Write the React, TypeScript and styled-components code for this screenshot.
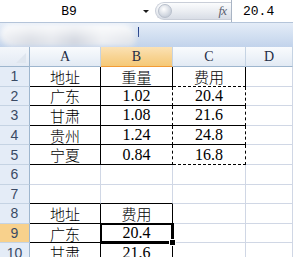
import { Fragment, ReactElement } from "react";
import styled, { createGlobalStyle, css } from "styled-components";

const GlobalStyle = createGlobalStyle`
  html, body {
    margin: 0;
    padding: 0;
    background: #ffffff;
    overflow: hidden;
  }
`;

type Edge = "g" | "s" | "d";

const Page = styled.div`
  width: 293px;
  height: 257px;
  overflow: hidden;
  display: flex;
  flex-direction: column;
  background: #ffffff;
  & > * {
    flex-shrink: 0;
  }
`;

const FormulaBar = styled.div`
  height: 23px;
  display: flex;
  align-items: stretch;
  background: #ffffff;
  border-bottom: 1px solid #b4c4d9;
  box-sizing: border-box;
`;

const NameBox = styled.div`
  width: 138px;
  display: flex;
  align-items: center;
  justify-content: center;
  font-family: "Liberation Mono", monospace;
  font-size: 13px;
  color: #000;
  padding-top: 1px;
`;

const DropArrow = styled.div`
  width: 16px;
  display: flex;
  align-items: center;
  justify-content: center;
  &::before {
    content: "";
    border-left: 3px solid transparent;
    border-right: 3px solid transparent;
    border-top: 3px solid #1b1b1b;
  }
`;

const FxButton = styled.div`
  width: 76px;
  margin: 2px 0 2px 1px;
  border-radius: 10px 0 0 10px;
  border: 1px solid #c9ced8;
  border-right: none;
  background: linear-gradient(#fbfcfd, #e9ecf1 55%, #d8dde6);
  display: flex;
  align-items: center;
  justify-content: space-between;
  padding: 0 5px 0 2px;
  box-sizing: border-box;
`;

const Knob = styled.span`
  width: 12px;
  height: 12px;
  border-radius: 50%;
  background: radial-gradient(circle at 40% 35%, #ffffff, #c7ced9 75%);
  border: 1px solid #b8bfcb;
`;

const FxLabel = styled.span`
  font-family: "Liberation Serif", serif;
  font-style: italic;
  font-size: 13px;
  color: #5b6270;
  letter-spacing: -1px;
`;

const FormulaInput = styled.div`
  flex: 1;
  border-left: 1px solid #a9b4c4;
  display: flex;
  align-items: center;
  padding-left: 11px;
  font-family: "Liberation Mono", monospace;
  font-size: 13px;
  color: #000;
  padding-top: 1px;
`;

const RibbonStrip = styled.div`
  height: 24px;
  display: flex;
  align-items: center;
  overflow: hidden;
  background: linear-gradient(#e4ecf7, #d3e0f1 50%, #c2d3eb);
`;

const BlurBlob = styled.div`
  width: 136px;
  height: 22px;
  flex-shrink: 0;
  border-radius: 10px 14px 6px 12px;
  background:
    linear-gradient(180deg, rgba(255, 255, 255, 0.9), rgba(255, 255, 255, 0.1) 75%),
    linear-gradient(90deg, #eceef3, #d6dae2 22%, #e2e5eb 38%, #cdd2dc 55%, #eceef2 75%, #dde1e8);
  filter: blur(2.5px);
`;

const Caret = styled.div`
  width: 1px;
  height: 10px;
  margin: -6px 0 0 2px;
  background: #1f3c86;
`;

const Sheet = styled.div`
  display: grid;
  grid-template-columns: 30px 71px 72px 73px 1fr;
  grid-template-rows: 20px repeat(10, 19.6px);
`;

const Corner = styled.div`
  background: linear-gradient(#f4f7fb, #e3eaf4);
  border-right: 1px solid #9eb6ce;
  border-bottom: 1px solid #9eb6ce;
  box-sizing: border-box;
  position: relative;
  &::after {
    content: "";
    position: absolute;
    right: 3px;
    bottom: 3px;
    border-left: 10px solid transparent;
    border-bottom: 10px solid #dfe6ef;
  }
`;

const ColHeader = styled.div<{ $active?: boolean }>`
  display: flex;
  align-items: center;
  justify-content: center;
  font-family: "Liberation Serif", serif;
  font-size: 14px;
  color: #1e2c44;
  box-sizing: border-box;
  border-right: 1px solid #c5d3e3;
  border-bottom: 1px solid #9eb6ce;
  background: ${({ $active }) =>
    $active
      ? "linear-gradient(#fbe2b5, #f8d494 50%, #f5c977)"
      : "linear-gradient(#f9fbfd, #eef3f9 50%, #e2eaf4)"};
  ${({ $active }) =>
    $active &&
    css`
      border-bottom-color: #f29b36;
    `}
`;

const RowHeader = styled.div<{ $active?: boolean }>`
  display: flex;
  align-items: center;
  justify-content: center;
  font-family: "Liberation Sans", sans-serif;
  font-size: 14px;
  color: #3a4a64;
  box-sizing: border-box;
  border-right: 1px solid #9eb6ce;
  border-bottom: 1px solid #c5d3e3;
  background: ${({ $active }) => ($active ? "#f8d18c" : "#e4ecf7")};
`;

const edge = (e: Edge) =>
  e === "g" ? "1px solid #d0d7e5" : e === "s" ? "1px solid #000" : "1px dashed #000";

const Cell = styled.div<{ $r: Edge; $b: Edge; $cjk?: boolean; $selected?: boolean }>`
  display: flex;
  align-items: center;
  justify-content: center;
  box-sizing: border-box;
  position: relative;
  color: #000;
  border-right: ${({ $r }) => edge($r)};
  border-bottom: ${({ $b }) => edge($b)};
  font-family: ${({ $cjk }) =>
    $cjk ? '"Noto Sans CJK SC", sans-serif' : '"Liberation Serif", serif'};
  font-size: ${({ $cjk }) => ($cjk ? "15px" : "16px")};
  font-weight: ${({ $cjk }) => ($cjk ? 300 : 400)};
  ${({ $selected }) =>
    $selected &&
    css`
      box-shadow: inset 0 0 0 1px #000, 0 0 0 1px #000;
      &::after {
        content: "";
        position: absolute;
        right: -4px;
        bottom: -4px;
        width: 5px;
        height: 5px;
        background: #000;
        border: 1px solid #fff;
        z-index: 2;
      }
    `}
`;

type CellData = { text?: string; r: Edge; b: Edge; selected?: boolean };

const isCjk = (t?: string) => !!t && /[\u4e00-\u9fff]/.test(t);

const S = "s" as Edge;
const G = "g" as Edge;
const D = "d" as Edge;

const rows: CellData[][] = [
  [
    { text: "地址", r: S, b: S },
    { text: "重量", r: S, b: S },
    { text: "费用", r: S, b: D },
  ],
  [
    { text: "广东", r: S, b: S },
    { text: "1.02", r: D, b: S },
    { text: "20.4", r: D, b: S },
  ],
  [
    { text: "甘肃", r: S, b: S },
    { text: "1.08", r: D, b: S },
    { text: "21.6", r: D, b: S },
  ],
  [
    { text: "贵州", r: S, b: S },
    { text: "1.24", r: D, b: S },
    { text: "24.8", r: D, b: S },
  ],
  [
    { text: "宁夏", r: S, b: S },
    { text: "0.84", r: D, b: S },
    { text: "16.8", r: D, b: D },
  ],
  [
    { r: G, b: G },
    { r: G, b: G },
    { r: G, b: G },
  ],
  [
    { r: G, b: S },
    { r: G, b: S },
    { r: G, b: G },
  ],
  [
    { text: "地址", r: S, b: S },
    { text: "费用", r: S, b: S },
    { r: G, b: G },
  ],
  [
    { text: "广东", r: S, b: S },
    { text: "20.4", r: S, b: S, selected: true },
    { r: G, b: G },
  ],
  [
    { text: "甘肃", r: S, b: S },
    { text: "21.6", r: S, b: S },
    { r: G, b: G },
  ],
];

export default function App(): ReactElement {
  return (
    <Page>
      <GlobalStyle />
      <FormulaBar>
        <NameBox>B9</NameBox>
        <DropArrow />
        <FxButton>
          <Knob />
          <FxLabel>fx</FxLabel>
        </FxButton>
        <FormulaInput>20.4</FormulaInput>
      </FormulaBar>
      <RibbonStrip>
        <BlurBlob />
        <Caret />
      </RibbonStrip>
      <Sheet>
        <Corner />
        <ColHeader>A</ColHeader>
        <ColHeader $active>B</ColHeader>
        <ColHeader>C</ColHeader>
        <ColHeader>D</ColHeader>
        {rows.map((row, i) => (
          <Fragment key={i}>
            <RowHeader $active={i === 8}>{i + 1}</RowHeader>
            {row.map((c, j) => (
              <Cell
                key={j}
                $r={c.r}
                $b={c.b}
                $cjk={isCjk(c.text)}
                $selected={c.selected}
              >
                {c.text}
              </Cell>
            ))}
            <Cell $r={G} $b={G} />
          </Fragment>
        ))}
      </Sheet>
    </Page>
  );
}
